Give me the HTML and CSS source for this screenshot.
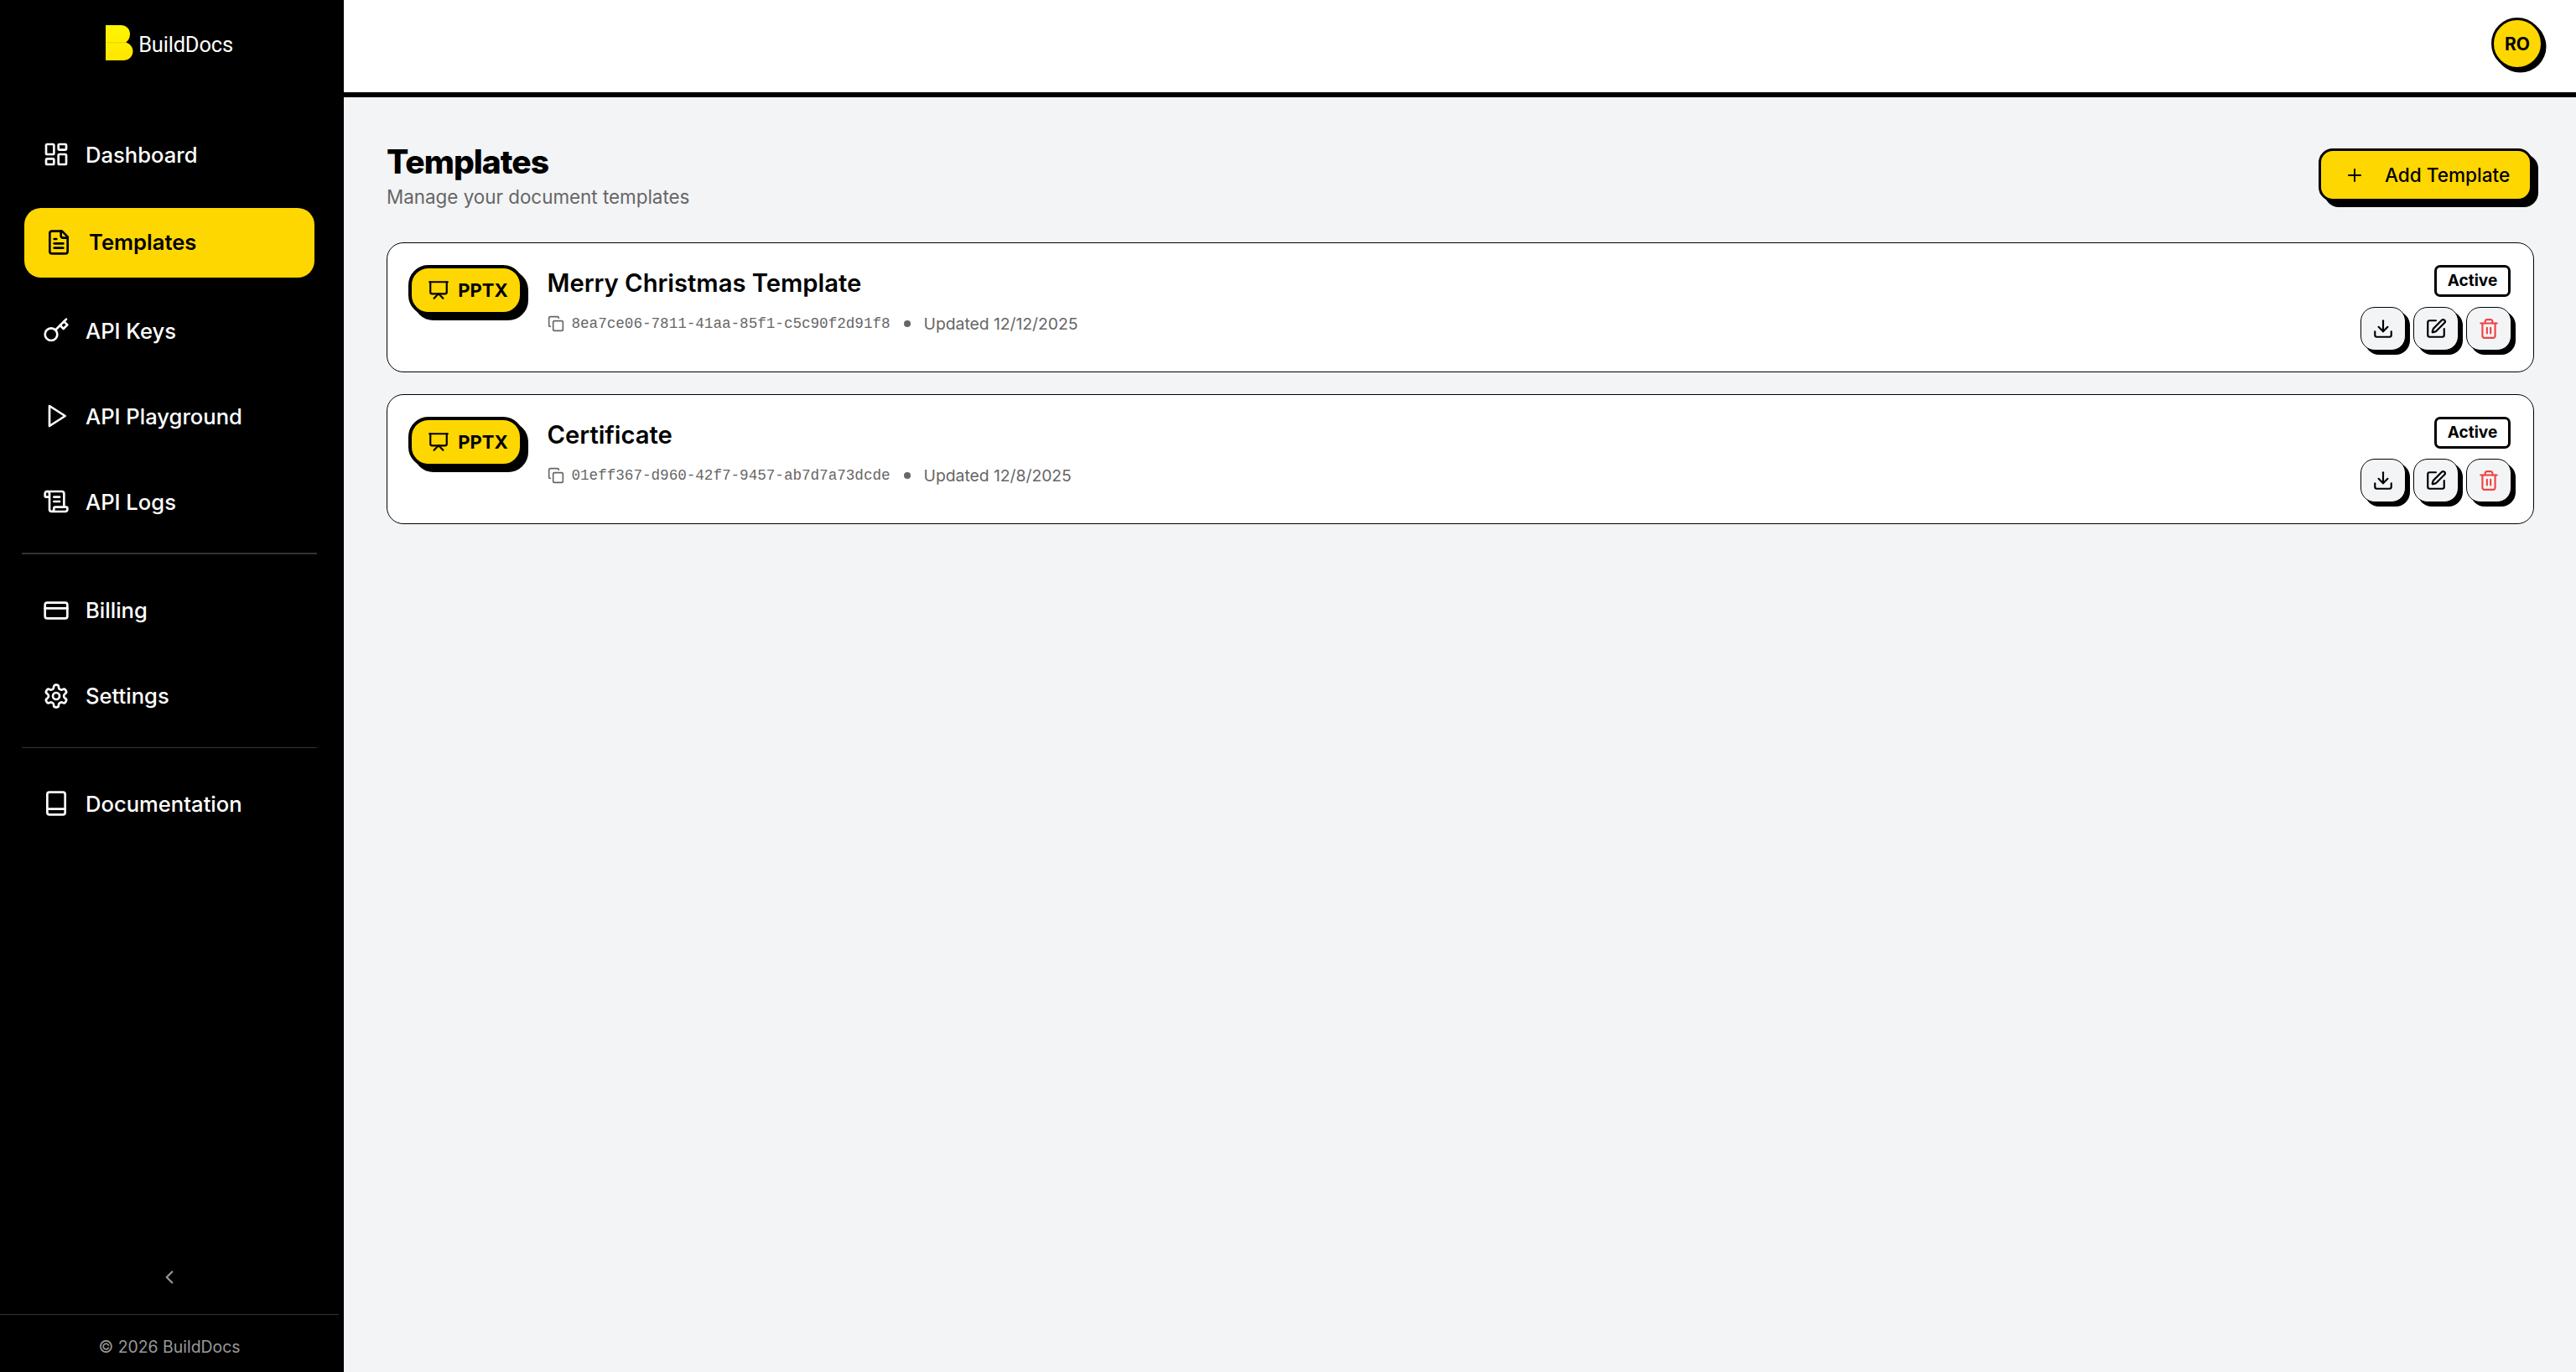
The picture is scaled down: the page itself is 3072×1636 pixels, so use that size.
FILE: index.html
```html
<!DOCTYPE html>
<html lang="en">
<head>
<meta charset="utf-8">
<title>BuildDocs - Templates</title>
<link rel="stylesheet" href="styles.css">
</head>
<body>
<div class="app">
  <aside class="sidebar">
    <div class="brand">
      <svg class="logo" viewBox="0 0 33 42"><defs><linearGradient id="lg" x1="0" y1="0" x2="0" y2="1"><stop offset="0" stop-color="#fff500"/><stop offset="1" stop-color="#ffe600"/></linearGradient></defs><path fill="url(#lg)" d="M0 0H18C24.500 0 29 4.500 29 10.500C29 15 27 18.500 24 20.500C29 22 32.500 26 32.500 31C32.500 37.500 27.500 42 21 42H0Z"/><path d="M0 20.800H25" stroke="#d8c400" stroke-width="0.700" fill="none"/></svg>
      <span class="brand-name">BuildDocs</span>
    </div>
    <nav class="nav">
      <a class="nav-item"><svg class="icon" viewBox="0 0 24 24"><rect x="3" y="3" width="7" height="9" rx="1"/><rect x="14" y="3" width="7" height="5" rx="1"/><rect x="14" y="12" width="7" height="9" rx="1"/><rect x="3" y="16" width="7" height="5" rx="1"/></svg><span>Dashboard</span></a>
      <a class="nav-item active"><svg class="icon" viewBox="0 0 24 24"><path d="M15 2H6a2 2 0 0 0-2 2v16a2 2 0 0 0 2 2h12a2 2 0 0 0 2-2V7Z"/><path d="M14 2v4a2 2 0 0 0 2 2h4"/><path d="M10 9H8"/><path d="M16 13H8"/><path d="M16 17H8"/></svg><span>Templates</span></a>
      <a class="nav-item"><svg class="icon" viewBox="0 0 24 24"><circle cx="7.500" cy="15.500" r="5.500"/><path d="m21 2-9.600 9.600"/><path d="m15.500 7.500 3 3L22 7l-3-3"/></svg><span>API Keys</span></a>
      <a class="nav-item"><svg class="icon" viewBox="0 0 24 24"><polygon points="6 3 20 12 6 21 6 3"/></svg><span>API Playground</span></a>
      <a class="nav-item"><svg class="icon" viewBox="0 0 24 24"><path d="M15 12h-5"/><path d="M15 8h-5"/><path d="M19 17V5a2 2 0 0 0-2-2H4"/><path d="M8 21h12a2 2 0 0 0 2-2v-1a1 1 0 0 0-1-1H11a1 1 0 0 0-1 1v1a2 2 0 1 1-4 0V5a2 2 0 1 0-4 0v2a1 1 0 0 0 1 1h3"/></svg><span>API Logs</span></a>
      <div class="divider"></div>
      <a class="nav-item"><svg class="icon" viewBox="0 0 24 24"><rect x="2" y="5" width="20" height="14" rx="2"/><path d="M2 10h20"/></svg><span>Billing</span></a>
      <a class="nav-item"><svg class="icon" viewBox="0 0 24 24"><path d="M12.220 2h-.44a2 2 0 0 0-2 2v.18a2 2 0 0 1-1 1.730l-.43.25a2 2 0 0 1-2 0l-.15-.08a2 2 0 0 0-2.730.73l-.22.38a2 2 0 0 0 .73 2.730l.15.1a2 2 0 0 1 1 1.720v.51a2 2 0 0 1-1 1.740l-.15.09a2 2 0 0 0-.73 2.730l.22.38a2 2 0 0 0 2.730.73l.15-.08a2 2 0 0 1 2 0l.43.25a2 2 0 0 1 1 1.730V20a2 2 0 0 0 2 2h.44a2 2 0 0 0 2-2v-.18a2 2 0 0 1 1-1.730l.43-.25a2 2 0 0 1 2 0l.15.08a2 2 0 0 0 2.730-.73l.22-.39a2 2 0 0 0-.73-2.730l-.15-.08a2 2 0 0 1-1-1.740v-.5a2 2 0 0 1 1-1.740l.15-.09a2 2 0 0 0 .73-2.730l-.22-.38a2 2 0 0 0-2.730-.73l-.15.08a2 2 0 0 1-2 0l-.43-.25a2 2 0 0 1-1-1.730V4a2 2 0 0 0-2-2z"/><circle cx="12" cy="12" r="3"/></svg><span>Settings</span></a>
      <div class="divider tight"></div>
      <a class="nav-item"><svg class="icon" viewBox="0 0 24 24"><rect x="4" y="2" width="16" height="20" rx="2"/><path d="M4 17h16"/></svg><span>Documentation</span></a>
    </nav>
    <div class="collapse"><svg class="chev" viewBox="0 0 24 24"><path d="m15 18-6-6 6-6"/></svg></div>
    <footer class="side-foot">© 2026 BuildDocs</footer>
  </aside>
  <div class="content">
    <header class="topbar"><div class="avatar">RO</div></header>
    <main class="main">
      <div class="page-head">
        <div>
          <h1 class="page-title">Templates</h1>
          <p class="page-sub">Manage your document templates</p>
        </div>
        <button class="add-btn"><svg class="icon-add" viewBox="0 0 24 24"><path d="M5 12h14"/><path d="M12 5v14"/></svg><span>Add Template</span></button>
      </div>
      <div class="list">
        <article class="card">
          <div class="type-badge"><svg class="icon-type" viewBox="0 0 24 24"><path d="M2 3h20"/><path d="M21 3v11a2 2 0 0 1-2 2H5a2 2 0 0 1-2-2V3"/><path d="m7 21 5-5 5 5"/></svg><span>PPTX</span></div>
          <div class="info">
            <h2 class="card-title">Merry Christmas Template</h2>
            <div class="meta"><svg class="icon-copy" viewBox="0 0 24 24"><rect x="8" y="8" width="14" height="14" rx="2"/><path d="M4 16c-1.100 0-2-.9-2-2V4c0-1.100.9-2 2-2h10c1.100 0 2 .9 2 2"/></svg><code class="tid">8ea7ce06-7811-41aa-85f1-c5c90f2d91f8</code><i class="dot"></i><span>Updated 12/12/2025</span></div>
          </div>
          <div class="side">
            <span class="status">Active</span>
            <div class="actions">
              <button class="act"><svg class="icon-act" viewBox="0 0 24 24"><path d="M21 15v4a2 2 0 0 1-2 2H5a2 2 0 0 1-2-2v-4"/><path d="m7 10 5 5 5-5"/><path d="M12 15V3"/></svg></button>
              <button class="act"><svg class="icon-act" viewBox="0 0 24 24"><path d="M12 3H5a2 2 0 0 0-2 2v14a2 2 0 0 0 2 2h14a2 2 0 0 0 2-2v-7"/><path d="M18.375 2.625a1 1 0 0 1 3 3l-9.013 9.014a2 2 0 0 1-.853.505l-2.873.84a.5.5 0 0 1-.62-.62l.84-2.873a2 2 0 0 1 .506-.852z"/></svg></button>
              <button class="act danger"><svg class="icon-act" viewBox="0 0 24 24"><path d="M3 6h18"/><path d="M19 6v14c0 1-1 2-2 2H7c-1 0-2-1-2-2V6"/><path d="M8 6V4c0-1 1-2 2-2h4c1 0 2 1 2 2v2"/><path d="M10 11v6"/><path d="M14 11v6"/></svg></button>
            </div>
          </div>
        </article>
        <article class="card">
          <div class="type-badge"><svg class="icon-type" viewBox="0 0 24 24"><path d="M2 3h20"/><path d="M21 3v11a2 2 0 0 1-2 2H5a2 2 0 0 1-2-2V3"/><path d="m7 21 5-5 5 5"/></svg><span>PPTX</span></div>
          <div class="info">
            <h2 class="card-title">Certificate</h2>
            <div class="meta"><svg class="icon-copy" viewBox="0 0 24 24"><rect x="8" y="8" width="14" height="14" rx="2"/><path d="M4 16c-1.100 0-2-.9-2-2V4c0-1.100.9-2 2-2h10c1.100 0 2 .9 2 2"/></svg><code class="tid">01eff367-d960-42f7-9457-ab7d7a73dcde</code><i class="dot"></i><span>Updated 12/8/2025</span></div>
          </div>
          <div class="side">
            <span class="status">Active</span>
            <div class="actions">
              <button class="act"><svg class="icon-act" viewBox="0 0 24 24"><path d="M21 15v4a2 2 0 0 1-2 2H5a2 2 0 0 1-2-2v-4"/><path d="m7 10 5 5 5-5"/><path d="M12 15V3"/></svg></button>
              <button class="act"><svg class="icon-act" viewBox="0 0 24 24"><path d="M12 3H5a2 2 0 0 0-2 2v14a2 2 0 0 0 2 2h14a2 2 0 0 0 2-2v-7"/><path d="M18.375 2.625a1 1 0 0 1 3 3l-9.013 9.014a2 2 0 0 1-.853.505l-2.873.84a.5.5 0 0 1-.62-.62l.84-2.873a2 2 0 0 1 .506-.852z"/></svg></button>
              <button class="act danger"><svg class="icon-act" viewBox="0 0 24 24"><path d="M3 6h18"/><path d="M19 6v14c0 1-1 2-2 2H7c-1 0-2-1-2-2V6"/><path d="M8 6V4c0-1 1-2 2-2h4c1 0 2 1 2 2v2"/><path d="M10 11v6"/><path d="M14 11v6"/></svg></button>
            </div>
          </div>
        </article>
      </div>
    </main>
  </div>
</div>
</body>
</html>
```
FILE: styles.css
```css
* { box-sizing: border-box; }
html, body { margin: 0; height: 100%; }
body { font-family: Inter, "Liberation Sans", sans-serif; color: #000; background: #f3f4f6; overflow: hidden; }
.app { display: flex; height: 1636px; }
.sidebar { width: 410px; flex: none; background: #000; border-right: 6px solid #000; display: flex; flex-direction: column; color: #fff; }
.brand { height: 143px; padding-top: 30px; display: flex; align-items: flex-start; justify-content: center; gap: 6px; }
.logo { width: 33px; height: 42px; flex: none; }
.brand-name { font-size: 25.500px; line-height: 46px; letter-spacing: -0.2px; color: #fff; font-family: Roboto, Inter, sans-serif; font-weight: 400; }
.nav { display: flex; flex-direction: column; gap: 20px; }
.nav-item { height: 82px; display: flex; align-items: center; gap: 19px; padding-left: 51px; font-size: 25.600px; font-weight: 500; color: #fff; }
.icon { width: 32px; height: 32px; flex: none; fill: none; stroke: currentColor; stroke-width: 2; stroke-linecap: round; stroke-linejoin: round; }
.nav-item.active { height: 83px; margin: 3px 29px 2px; padding: 0 0 2px 25px; background: #ffd700; color: #000; font-weight: 600; border-radius: 20px; gap: 20px; }
.divider { height: 1.500px; background: #333; margin: 0 26px 6px; }
.divider.tight { margin-bottom: 5px; }
.collapse { margin-top: auto; height: 78px; display: flex; align-items: center; justify-content: center; padding-bottom: 10px; }
.chev { width: 26px; height: 26px; fill: none; stroke: #999; stroke-width: 2; stroke-linecap: round; stroke-linejoin: round; }
.side-foot { height: 69px; padding-top: 7px; border-top: 1.500px solid #333; display: flex; align-items: center; justify-content: center; font-size: 19.400px; color: #999; }
.content { flex: 1; min-width: 0; display: flex; flex-direction: column; }
.topbar { height: 116px; background: #fff; border-bottom: 6px solid #000; display: flex; justify-content: flex-end; padding: 21px 39px 0 0; }
.avatar { width: 62px; height: 62px; border-radius: 50%; background: #ffd700; border: 3.500px solid #000; box-shadow: 3.500px 3.500px 0 #000; display: flex; align-items: center; justify-content: center; font-size: 21px; font-weight: 700; }
.main { flex: 1; padding: 52px 50px 0 51px; }
.page-head { display: flex; justify-content: space-between; align-items: flex-start; height: 121px; }
.page-title { margin: 0; padding-top: 2px; font-size: 39px; line-height: 46px; font-weight: 800; letter-spacing: -1px; }
.page-sub { margin: 0; padding-top: 4px; font-size: 22.400px; line-height: 30px; color: #666; }
.add-btn { margin: 9px 2px 0 0; width: 255px; height: 63px; background: #ffd700; border: 3.500px solid #000; border-radius: 17px; box-shadow: 7px 7px 0 #000; display: flex; align-items: center; gap: 24px; padding: 0 0 0 28px; font: 500 22.600px Inter, sans-serif; color: #000; }
.icon-add { width: 24px; height: 24px; flex: none; fill: none; stroke: #000; stroke-width: 2; stroke-linecap: round; }
.list { display: flex; flex-direction: column; gap: 26px; }
.card { height: 155px; background: #fff; border: 1.500px solid #000; border-radius: 20px; padding: 25.500px 27px 0 24.500px; display: flex; align-items: flex-start; }
.type-badge { width: 137px; height: 60px; background: #ffd700; border: 4px solid #000; border-radius: 24px; box-shadow: 6px 6px 0 #000; flex: none; padding: 1px 0 0 6px; display: flex; align-items: center; justify-content: center; gap: 10px; font-size: 22px; font-weight: 700; }
.icon-type { width: 26px; height: 26px; flex: none; fill: none; stroke: #000; stroke-width: 2; stroke-linecap: round; stroke-linejoin: round; }
.info { margin-left: 29px; flex: 1; min-width: 0; }
.card-title { margin: 0; padding-top: 2px; font-size: 29.200px; line-height: 40px; font-weight: 600; }
.meta { margin-top: 13px; display: flex; align-items: center; font-size: 19.300px; line-height: 30px; color: #666; }
.icon-copy { width: 20px; height: 20px; flex: none; fill: none; stroke: #666; stroke-width: 2; stroke-linecap: round; stroke-linejoin: round; margin-right: 9px; }
.tid { font-family: "Liberation Mono", monospace; font-size: 17.600px; color: #666; }
.dot { width: 8px; height: 8px; border-radius: 50%; background: #666; margin: 0 16px; }
.side { flex: none; display: flex; flex-direction: column; align-items: flex-end; }
.status { height: 38px; width: 91px; border: 3.500px solid #000; border-radius: 7px; display: flex; align-items: center; justify-content: center; font-size: 19px; font-weight: 700; }
.actions { margin-top: 12px; margin-right: -1px; display: flex; gap: 9px; }
.act { width: 54px; height: 52px; padding: 0; background: #f3f4f6; border: 1.500px solid #000; border-radius: 17px; box-shadow: 5px 5px 0 #000; display: flex; align-items: center; justify-content: center; color: #000; }
.act.danger { color: #ef4444; }
.icon-act { width: 26px; height: 26px; fill: none; stroke: currentColor; stroke-width: 2; stroke-linecap: round; stroke-linejoin: round; }
```
